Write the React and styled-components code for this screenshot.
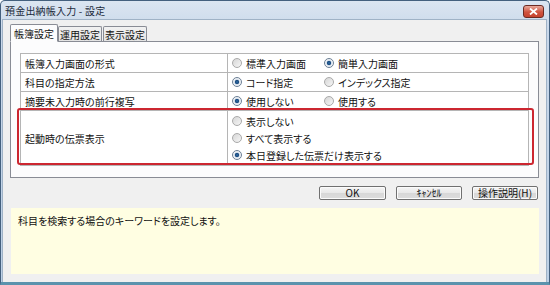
import React from "react";
import styled, { createGlobalStyle } from "styled-components";

const Global = createGlobalStyle`
  html, body { margin: 0; padding: 0; background: #ffffff; }
  body { font-family: "Noto Sans CJK JP", "Noto Sans", sans-serif; }
  * { box-sizing: border-box; }
`;

const FONT = `"Noto Sans CJK JP", "Noto Sans", sans-serif`;

const Window = styled.div`
  width: 550px;
  height: 285px;
  display: flex;
  flex-direction: column;
  background: linear-gradient(#dbe5f1, #c9d8ea 30px, #bcd0e6);
  border: 1px solid #44607e;
  border-bottom: 3px solid #5b93ad;
  border-radius: 5px 5px 0 0;
  font-family: ${FONT};
  font-size: 10px;
  color: #111;
  font-feature-settings: "palt";
`;

const TitleBar = styled.div`
  height: 18px;
  display: flex;
  align-items: center;
  justify-content: space-between;
  padding: 0 5px 0 4px;
  flex-shrink: 0;
`;

const Title = styled.span`
  font-size: 10px;
  color: #1b2a3a;
  letter-spacing: 0.2px;
`;

const CloseBtn = styled.div`
  width: 21px;
  height: 13px;
  margin-top: 3px;
  border: 1px solid #6d2a22;
  border-radius: 3px;
  background: linear-gradient(#e9a99b, #d0533f 55%, #c5432f);
  display: flex;
  align-items: center;
  justify-content: center;
`;

const Client = styled.div`
  flex: 1;
  margin: 0 2px 0 1px;
  background: #f0f0f0;
  border: 1px solid #9fb2c6;
  border-bottom: none;
  padding: 3px 8px 4px 5px;
  display: flex;
  flex-direction: column;
`;

const TabStrip = styled.div`
  display: flex;
  align-items: flex-end;
  height: 18px;
  padding-left: 2px;
  position: relative;
  z-index: 1;
`;

const Tab = styled.div`
  height: ${(p) => (p.$active ? "18px" : "15px")};
  padding: 0 ${(p) => (p.$active ? "3px" : "1px")};
  margin-right: ${(p) => (p.$active ? "0" : "1px")};
  border: 1px solid #898c95;
  border-bottom: ${(p) => (p.$active ? "1px solid #fcfcfd" : "none")};
  border-radius: 2px 2px 0 0;
  background: ${(p) =>
    p.$active ? "#fcfcfd" : "linear-gradient(#f2f2f2, #e3e3e3)"};
  display: flex;
  align-items: center;
  font-size: 10px;
  color: #111;
  margin-bottom: ${(p) => (p.$active ? "-1px" : "0")};
`;

const Panel = styled.div`
  margin-left: 2px;
  width: 529px;
  height: 137px;
  border: 1px solid #898c95;
  background: #fcfcfd;
  padding: 11px 9px 0 9px;
`;

const TableWrap = styled.div`
  position: relative;
`;

const Table = styled.div`
  border: 1px solid #b5b5b5;
  background: #ffffff;
  display: grid;
  grid-template-columns: 207px 1fr;
`;

const LabelCell = styled.div`
  height: ${(p) => p.$h}px;
  border-right: 1px solid #b5b5b5;
  border-bottom: ${(p) => (p.$last ? "none" : "1px solid #b5b5b5")};
  display: flex;
  align-items: center;
  padding-left: 4px;
`;

const OptionCell = styled.div`
  height: ${(p) => p.$h}px;
  border-bottom: ${(p) => (p.$last ? "none" : "1px solid #b5b5b5")};
  display: flex;
  flex-direction: ${(p) => (p.$column ? "column" : "row")};
  justify-content: ${(p) => (p.$column ? "center" : "flex-start")};
  align-items: ${(p) => (p.$column ? "flex-start" : "center")};
  gap: ${(p) => (p.$column ? "5px" : "0")};
  padding-left: 4px;
`;

const Option = styled.label`
  display: flex;
  align-items: center;
  gap: 4px;
  width: ${(p) => (p.$wide ? "auto" : "92px")};
  height: 12px;
`;

const Radio = styled.span`
  width: 10px;
  height: 10px;
  border-radius: 50%;
  border: 1px solid ${(p) => (p.$checked ? "#6c7f95" : "#a9a9a9")};
  background: ${(p) =>
    p.$checked
      ? "radial-gradient(circle, #2d6aa3 0, #1c4c80 1.8px, #dfe7f0 2.6px, #f4f6f8 4px)"
      : "linear-gradient(135deg, #d6d6d6, #f6f6f6)"};
  flex-shrink: 0;
`;

const Highlight = styled.div`
  position: absolute;
  left: -3px;
  right: -5px;
  top: 55px;
  height: 57px;
  border: 2px solid #cc2630;
  border-radius: 3px;
  pointer-events: none;
`;

const ButtonRow = styled.div`
  display: flex;
  justify-content: flex-end;
  gap: 10px;
  margin-top: 8px;
`;

const Button = styled.div`
  width: ${(p) => p.$w}px;
  height: 14px;
  border: 1px solid #707070;
  border-radius: 2px;
  background: linear-gradient(#f6f6f6, #e8e8e8 50%, #d8d8d8 51%, #dcdcdc);
  box-shadow: inset 0 0 0 1px #fbfbfb;
  display: flex;
  align-items: center;
  justify-content: center;
  font-size: 10px;
  color: #111;
  line-height: 1;
`;

const InfoPane = styled.div`
  margin-top: 8px;
  margin-left: 3px;
  width: 528px;
  height: 66px;
  background: #fffee2;
  padding: 5px 7px;
  font-size: 10px;
  color: #111;
`;

const rows = [
  {
    label: "帳簿入力画面の形式",
    options: ["標準入力画面", "簡単入力画面"],
    checked: 1,
  },
  { label: "科目の指定方法", options: ["コード指定", "インデックス指定"], checked: 0 },
  { label: "摘要未入力時の前行複写", options: ["使用しない", "使用する"], checked: 0 },
];

export default function App() {
  return (
    <>
      <Global />
      <Window>
        <TitleBar>
          <Title>預金出納帳入力 - 設定</Title>
          <CloseBtn>
            <svg width="9" height="7" viewBox="0 0 9 7">
              <path
                d="M1 0.5 L8 6.5 M8 0.5 L1 6.5"
                stroke="#ffffff"
                strokeWidth="1.8"
                fill="none"
              />
            </svg>
          </CloseBtn>
        </TitleBar>
        <Client>
          <TabStrip>
            <Tab $active>帳簿設定</Tab>
            <Tab>運用設定</Tab>
            <Tab>表示設定</Tab>
          </TabStrip>
          <Panel>
            <TableWrap>
              <Table>
                {rows.map((r) => (
                  <React.Fragment key={r.label}>
                    <LabelCell $h={19}>{r.label}</LabelCell>
                    <OptionCell $h={19}>
                      {r.options.map((o, i) => (
                        <Option key={o}>
                          <Radio $checked={i === r.checked} />
                          {o}
                        </Option>
                      ))}
                    </OptionCell>
                  </React.Fragment>
                ))}
                <LabelCell $h={54} $last>
                  起動時の伝票表示
                </LabelCell>
                <OptionCell $h={54} $last $column>
                  <Option $wide>
                    <Radio />
                    表示しない
                  </Option>
                  <Option $wide>
                    <Radio />
                    すべて表示する
                  </Option>
                  <Option $wide>
                    <Radio $checked />
                    本日登録した伝票だけ表示する
                  </Option>
                </OptionCell>
              </Table>
              <Highlight />
            </TableWrap>
          </Panel>
          <ButtonRow>
            <Button $w={67}>OK</Button>
            <Button $w={66}>ｷｬﾝｾﾙ</Button>
            <Button $w={66}>操作説明(H)</Button>
          </ButtonRow>
          <InfoPane>科目を検索する場合のキーワードを設定します。</InfoPane>
        </Client>
      </Window>
    </>
  );
}
